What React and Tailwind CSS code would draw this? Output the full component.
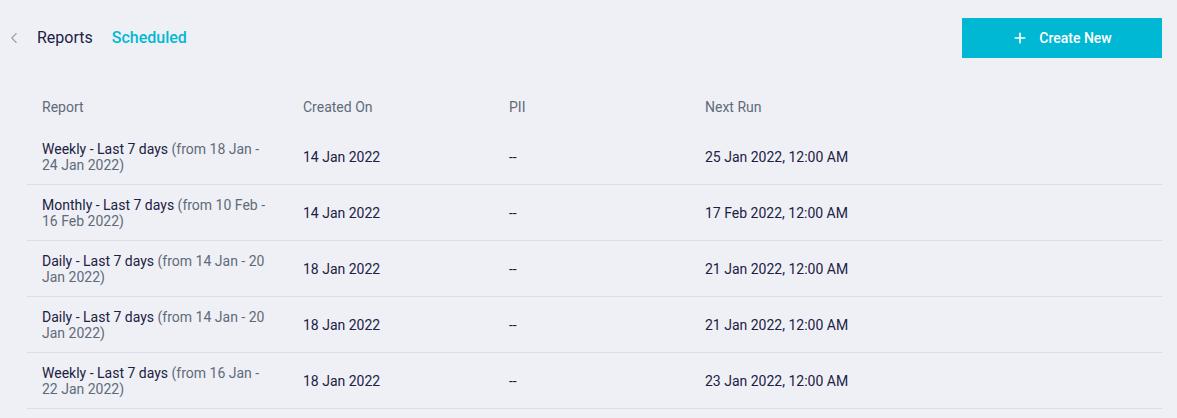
import { Plus, ChevronLeft } from "lucide-react";

const rows = [
  { name: "Weekly - Last 7 days", range: "(from 18 Jan - 24 Jan 2022)", created: "14 Jan 2022", pii: "--", next: "25 Jan 2022, 12:00 AM" },
  { name: "Monthly - Last 7 days", range: "(from 10 Feb - 16 Feb 2022)", created: "14 Jan 2022", pii: "--", next: "17 Feb 2022, 12:00 AM" },
  { name: "Daily - Last 7 days", range: "(from 14 Jan - 20 Jan 2022)", created: "18 Jan 2022", pii: "--", next: "21 Jan 2022, 12:00 AM" },
  { name: "Daily - Last 7 days", range: "(from 14 Jan - 20 Jan 2022)", created: "18 Jan 2022", pii: "--", next: "21 Jan 2022, 12:00 AM" },
  { name: "Weekly - Last 7 days", range: "(from 16 Jan - 22 Jan 2022)", created: "18 Jan 2022", pii: "--", next: "23 Jan 2022, 12:00 AM" },
];

export default function App() {
  return (
    <div className="min-h-[418px] bg-[#eff0f5] pt-[18px] pr-[15px] font-['Roboto',sans-serif] text-[#1b2144]">
      <div className="flex h-10 items-center justify-between">
        <div className="flex items-center">
          <ChevronLeft className="ml-[5px] h-[18px] w-[18px] text-[#9aa0ab]" strokeWidth={1.5} />
          <span className="ml-[14px] text-base">Reports</span>
          <span className="ml-[19px] text-base font-medium text-[#00b8d4]">Scheduled</span>
        </div>
        <button className="flex h-10 w-[200px] items-center justify-center gap-[11px] bg-[#00b8d4] text-sm font-medium text-white">
          <Plus className="h-4 w-4" strokeWidth={2.5} />
          Create New
        </button>
      </div>

      <div className="ml-[27px] mt-[27px] text-sm">
        <div className="grid h-[44px] grid-cols-[261px_206px_196px_1fr] items-center text-[#5e6b7a]">
          <div className="px-[15px]">Report</div>
          <div className="px-[15px]">Created On</div>
          <div className="px-[15px]">PII</div>
          <div className="px-[15px]">Next Run</div>
        </div>
        {rows.map((r, i) => (
          <div
            key={i}
            className="grid h-14 grid-cols-[261px_206px_196px_1fr] items-center border-b border-[#dadce6]"
          >
            <div className="px-[15px] leading-4">
              {r.name} <span className="text-[#5e6b7a]">{r.range}</span>
            </div>
            <div className="px-[15px]">{r.created}</div>
            <div className="px-[15px]">{r.pii}</div>
            <div className="px-[15px]">{r.next}</div>
          </div>
        ))}
      </div>
    </div>
  );
}
